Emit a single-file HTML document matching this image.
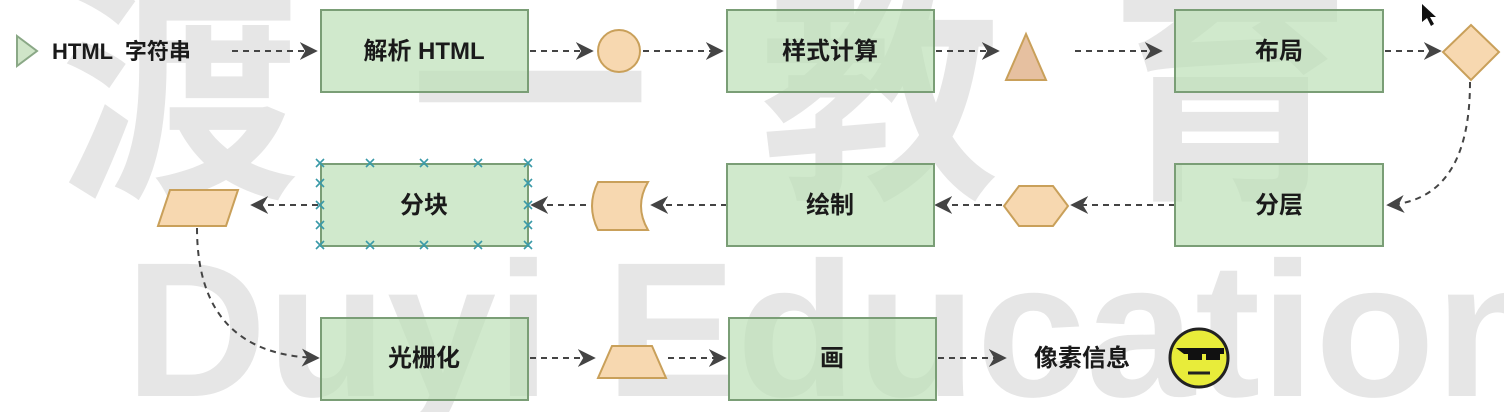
<!DOCTYPE html>
<html><head><meta charset="utf-8"><style>
html,body{margin:0;padding:0;background:#fff;width:1504px;height:412px;overflow:hidden}
svg{display:block}
text{font-family:"Liberation Sans","Noto Sans CJK SC",sans-serif}
</style></head><body>
<svg width="1504" height="412" viewBox="0 0 1504 412">
<defs>
<marker id="ar2" viewBox="0 0 10 10" refX="9" refY="5" markerWidth="18" markerHeight="18" orient="auto" markerUnits="userSpaceOnUse">
<path d="M0,0 L10,5 L0,10 L3,5 Z" fill="#444"/></marker>
</defs>
<g fill="#e6e6e6">
<text x="60" y="180" font-size="240" font-weight="bold" font-family="Noto Sans CJK SC, sans-serif" letter-spacing="110">渡一教育</text>
<text x="125" y="396" font-size="192" font-weight="bold" textLength="1430" lengthAdjust="spacingAndGlyphs">Duyi Education</text>
</g>
<g stroke="#444" stroke-width="2" stroke-dasharray="6,5" fill="none">
<line x1="232" y1="51" x2="316" y2="51" marker-end="url(#ar2)"/>
<line x1="530" y1="51" x2="592" y2="51" marker-end="url(#ar2)"/>
<line x1="643" y1="51" x2="722" y2="51" marker-end="url(#ar2)"/>
<line x1="936" y1="51" x2="998" y2="51" marker-end="url(#ar2)"/>
<line x1="1075" y1="51" x2="1161" y2="51" marker-end="url(#ar2)"/>
<line x1="1385" y1="51" x2="1440" y2="51" marker-end="url(#ar2)"/>
<path d="M1470,82 Q1470,200 1388,205" marker-end="url(#ar2)"/>
<line x1="1175" y1="205" x2="1072" y2="205" marker-end="url(#ar2)"/>
<line x1="1002" y1="205" x2="936" y2="205" marker-end="url(#ar2)"/>
<line x1="727" y1="205" x2="652" y2="205" marker-end="url(#ar2)"/>
<line x1="586" y1="205" x2="532" y2="205" marker-end="url(#ar2)"/>
<line x1="318" y1="205" x2="252" y2="205" marker-end="url(#ar2)"/>
<path d="M197,228 Q197,355 318,358" marker-end="url(#ar2)"/>
<line x1="530" y1="358" x2="594" y2="358" marker-end="url(#ar2)"/>
<line x1="668" y1="358" x2="725" y2="358" marker-end="url(#ar2)"/>
<line x1="938" y1="358" x2="1005" y2="358" marker-end="url(#ar2)"/>
</g>
<g fill="rgba(190,225,185,0.72)" stroke="#7a9e76" stroke-width="2">
<rect x="321" y="10" width="207" height="82"/>
<rect x="727" y="10" width="207" height="82"/>
<rect x="1175" y="10" width="208" height="82"/>
<rect x="321" y="164" width="207" height="82"/>
<rect x="727" y="164" width="207" height="82"/>
<rect x="1175" y="164" width="208" height="82"/>
<rect x="321" y="318" width="207" height="82"/>
<rect x="729" y="318" width="207" height="82"/>
</g>
<g stroke="#3a9aa8" stroke-width="1.6">
<path d="M316,159l8,8m0,-8l-8,8M366,159l8,8m0,-8l-8,8M420,159l8,8m0,-8l-8,8M474,159l8,8m0,-8l-8,8M524,159l8,8m0,-8l-8,8
M316,241l8,8m0,-8l-8,8M366,241l8,8m0,-8l-8,8M420,241l8,8m0,-8l-8,8M474,241l8,8m0,-8l-8,8M524,241l8,8m0,-8l-8,8
M316,179l8,8m0,-8l-8,8M316,201l8,8m0,-8l-8,8M316,221l8,8m0,-8l-8,8
M524,179l8,8m0,-8l-8,8M524,201l8,8m0,-8l-8,8M524,221l8,8m0,-8l-8,8"/>
</g>
<g fill="#f7d8b0" stroke="#c9a05a" stroke-width="2">
<circle cx="619" cy="51" r="21"/>
<path d="M1026,34 L1046,80 L1006,80 Z" fill="#e6c0a0"/>
<path d="M1471,25 L1499,52 L1471,80 L1443,52 Z"/>
<path d="M1019,186 L1053,186 L1068,206 L1053,226 L1019,226 L1004,206 Z"/>
<path d="M598,182 L648,182 Q634,206 648,230 L598,230 Q586,206 598,182 Z"/>
<path d="M170,190 L238,190 L226,226 L158,226 Z"/>
<path d="M612,346 L652,346 L666,378 L598,378 Z"/>
</g>
<path d="M17,36 L37,51 L17,66 Z" fill="#cfe5c8" stroke="#8aa886" stroke-width="2"/>
<g font-size="24" font-weight="bold" fill="#1a1a1a" text-anchor="middle">
<text x="424" y="59">解析 HTML</text>
<text x="830" y="59">样式计算</text>
<text x="1279" y="59">布局</text>
<text x="424" y="213">分块</text>
<text x="830" y="213">绘制</text>
<text x="1279" y="213">分层</text>
<text x="424" y="366">光栅化</text>
<text x="832" y="366">画</text>
<text x="1082" y="366">像素信息</text>
</g>
<text x="52" y="59" font-size="22" font-weight="bold" fill="#1a1a1a" xml:space="preserve">HTML  字符串</text>
<g>
<circle cx="1199" cy="358" r="29" fill="#e8ec3a" stroke="#222" stroke-width="3"/>
<path d="M1176,348 h48 v6 h-4 v6 h-14 v-6 h-4 v6 h-14 v-6 h-4 z" fill="#111"/>
<path d="M1188,373 h22" stroke="#222" stroke-width="3"/>
</g>
<path d="M1422,4 L1422,22 L1427,18 L1431,26 L1434,24 L1430,17 L1436,17 Z" fill="#111"/>
</svg>
</body></html>
